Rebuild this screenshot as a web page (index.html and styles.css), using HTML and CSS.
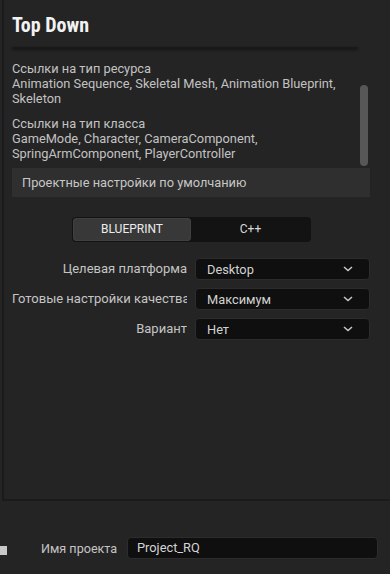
FILE: index.html
```html
<!DOCTYPE html>
<html lang="ru">
<head>
<meta charset="utf-8">
<link rel="stylesheet" href="styles.css">
</head>
<body>
<div class="panel">
  <h1 class="title">Top Down</h1>
  <div class="sep"></div>
  <div class="info">
    <div class="info-text">
      <p class="group">Ссылки на тип ресурса<br>Animation Sequence, Skeletal Mesh, Animation Blueprint, Skeleton</p>
      <p class="group">Ссылки на тип класса<br>GameMode, Character, CameraComponent, SpringArmComponent, PlayerController</p>
    </div>
    <div class="scrollbar"></div>
  </div>
  <div class="defaults">Проектные настройки по умолчанию</div>
  <div class="toggle-wrap">
    <div class="toggle">
      <div class="opt active">BLUEPRINT</div>
      <div class="opt">C++</div>
    </div>
  </div>
  <div class="rows">
    <div class="label">Целевая платформа</div>
    <div class="select"><span>Desktop</span><svg class="chev" width="10" height="6" viewBox="0 0 10 6"><path d="M1 1 L5 4.6 L9 1" fill="none" stroke="#c8c8c8" stroke-width="1.5"/></svg></div>
    <div class="label">Готовые настройки качества</div>
    <div class="select"><span>Максимум</span><svg class="chev" width="10" height="6" viewBox="0 0 10 6"><path d="M1 1 L5 4.6 L9 1" fill="none" stroke="#c8c8c8" stroke-width="1.5"/></svg></div>
    <div class="label">Вариант</div>
    <div class="select"><span>Нет</span><svg class="chev" width="10" height="6" viewBox="0 0 10 6"><path d="M1 1 L5 4.6 L9 1" fill="none" stroke="#c8c8c8" stroke-width="1.5"/></svg></div>
  </div>
</div>
<div class="bottom">
  <div class="square"></div>
  <div class="name-label">Имя проекта</div>
  <div class="name-input">Project_RQ</div>
</div>
</body>
</html>
```

FILE: styles.css
```css
html, body {
  margin: 0;
  padding: 0;
  background: #242424;
  font-family: Roboto, "Noto Sans", sans-serif;
  color: #c4c4c4;
  width: 390px;
  height: 574px;
  overflow: hidden;
}
.panel {
  margin-left: 2px;
  border-left: 2px solid #1b1b1b;
  border-bottom: 2px solid #1b1b1b;
  height: 499px;
  box-sizing: content-box;
  padding: 0 20px 0 8px;
}
.title {
  margin: 0;
  padding-top: 13px;
  font-family: "Liberation Sans Narrow", "Roboto Condensed", Roboto, sans-serif;
  font-weight: bold;
  font-size: 20px;
  line-height: 24px;
  color: #f2f2f2;
  height: 24px;
}
.sep {
  margin-top: 10px;
  width: 346px;
  height: 2px;
  background: #191919;
  box-shadow: 0 1px 3px rgba(0,0,0,0.5);
}
.info {
  display: flex;
  align-items: flex-start;
  margin-top: 13px;
  height: 104px;
}
.info-text {
  flex: 1;
  font-size: 12.8px;
  line-height: 14.8px;
  color: #c2c2c2;
}
.group {
  margin: 0 0 11px 0;
  width: 342px;
}
.group:last-child { margin-bottom: 0; }
.scrollbar {
  width: 8px;
  height: 81px;
  margin-top: 23px;
  margin-right: 2px;
  border-radius: 4px;
  background: #575757;
}
.defaults {
  margin-top: 2px;
  height: 29px;
  background: #2f2f2f;
  padding-left: 10px;
  font-size: 12.8px;
  line-height: 30px;
  color: #c6c6c6;
}
.toggle-wrap {
  display: flex;
  padding-left: 60px;
  margin-top: 20px;
}
.toggle {
  display: grid;
  grid-template-columns: 118px 1fr;
  width: 237px;
  height: 23px;
  padding: 1px;
  background: #131313;
  border-radius: 4px;
}
.opt {
  font-size: 12px;
  line-height: 23px;
  text-align: center;
  color: #d8d8d8;
}
.opt.active {
  background: #383838;
  border-radius: 4px;
  color: #ececec;
  box-shadow: inset 0 0 0 1px #404040;
}
.rows {
  margin-top: 16px;
  display: grid;
  grid-template-columns: 175px 175px;
  column-gap: 8px;
  row-gap: 8px;
  align-items: center;
}
.label {
  font-size: 13px;
  text-align: right;
  white-space: nowrap;
  overflow: hidden;
  color: #c4c4c4;
  line-height: 22px;
}
.select {
  height: 20px;
  background: #0f0f0f;
  border: 1px solid #2c2c2c;
  border-radius: 4px;
  display: flex;
  align-items: center;
  justify-content: space-between;
  padding: 0 16px 0 11px;
  font-size: 12.8px;
  color: #d2d2d2;
}
.chev { display: block; }
.bottom {
  display: flex;
  align-items: center;
  padding-top: 36px;
}
.square {
  width: 7px;
  height: 9px;
  margin-top: 4px;
  background: #c8c8c8;
}
.name-label {
  margin-left: 34px;
  font-size: 12.6px;
  color: #c4c4c4;
  width: 86px;
}
.name-input {
  width: 240px;
  height: 20px;
  background: #0f0f0f;
  border: 1px solid #2c2c2c;
  border-radius: 4px;
  padding-left: 9px;
  font-size: 12.8px;
  line-height: 20px;
  color: #d4d4d4;
}
```
